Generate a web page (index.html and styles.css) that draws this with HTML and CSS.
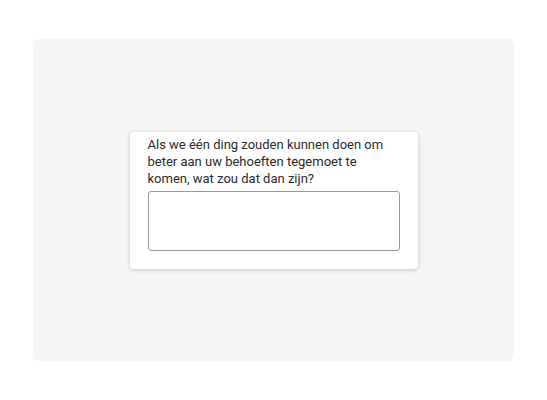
FILE: index.html
```html
<!DOCTYPE html>
<html lang="nl">
<head>
  <meta charset="UTF-8">
  <title>Vraag</title>
  <link rel="stylesheet" href="styles.css">
</head>
<body>
  <div class="panel">
    <div class="question-card">
      <p class="question">Als we één ding zouden kunnen doen om beter aan uw behoeften tegemoet te komen, wat zou dat dan zijn?</p>
      <textarea class="answer"></textarea>
    </div>
  </div>
</body>
</html>
```

FILE: styles.css
```css
body {
  margin: 0;
  background: #ffffff;
  font-family: Roboto, "Noto Sans", sans-serif;
}

.panel {
  margin: 39px 33px;
  height: 322px;
  background: #f5f5f5;
  border-radius: 6px;
  display: flex;
  align-items: center;
  justify-content: center;
}

.question-card {
  width: 252px;
  background: #ffffff;
  border-radius: 4px;
  padding: 4px 18px 18px;
  box-shadow: 0 1px 4px rgba(0, 0, 0, 0.2);
}

.question {
  margin: 0 0 4px;
  font-size: 13px;
  line-height: 17px;
  color: #2b2b2b;
}

.answer {
  display: block;
  box-sizing: border-box;
  width: 100%;
  height: 60px;
  margin: 0;
  border: 1px solid #9a9a9a;
  border-radius: 3px;
  resize: none;
  background: #ffffff;
}
```
